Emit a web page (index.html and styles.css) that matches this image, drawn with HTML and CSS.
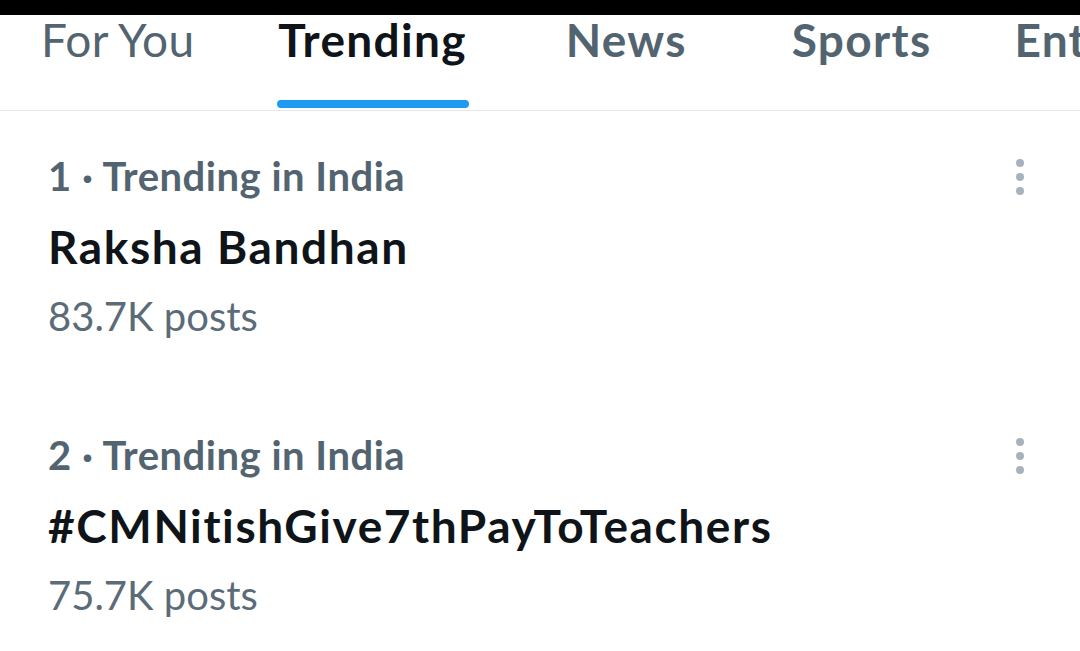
FILE: index.html
```html
<!DOCTYPE html>
<html lang="en">
<head>
<meta charset="utf-8">
<title>Trending</title>
<link rel="stylesheet" href="styles.css">
</head>
<body>
<div class="statusbar"></div>
<nav class="tabs">
  <div class="tab"><span class="tab-label">For You</span></div>
  <div class="tab active"><span class="tab-label">Trending</span><span class="indicator"></span></div>
  <div class="tab"><span class="tab-label">News</span></div>
  <div class="tab"><span class="tab-label">Sports</span></div>
  <div class="tab"><span class="tab-label">Entertainment</span></div>
</nav>
<main class="list">
  <section class="trend">
    <div class="trend-body">
      <div class="meta">1 · Trending in India</div>
      <div class="title">Raksha Bandhan</div>
      <div class="count">83.7K posts</div>
    </div>
    <div class="more" aria-label="More"><span></span><span></span><span></span></div>
  </section>
  <section class="trend">
    <div class="trend-body">
      <div class="meta">2 · Trending in India</div>
      <div class="title">#CMNitishGive7thPayToTeachers</div>
      <div class="count">75.7K posts</div>
    </div>
    <div class="more" aria-label="More"><span></span><span></span><span></span></div>
  </section>
</main>
</body>
</html>
```

FILE: styles.css
```css
* { box-sizing: border-box; }
html, body {
  margin: 0;
  padding: 0;
  background: #ffffff;
  width: 1080px;
  height: 651px;
  overflow: hidden;
  font-family: Lato, "Noto Sans", sans-serif;
}
.statusbar {
  height: 15px;
  background: #000000;
}
.tabs {
  display: flex;
  flex-wrap: nowrap;
  white-space: nowrap;
  border-bottom: 1px solid #e3e7ea;
  padding-top: 2px;
}
.tab {
  display: flex;
  flex-direction: column;
  align-items: stretch;
  padding: 0 53px 2px 52px;
  flex-shrink: 0;
}
.tab:first-child { padding-left: 41px; padding-right: 34px; }
.tab.active { padding-left: 50px; padding-right: 47px; }
.tab:last-child { padding-left: 30px; }
.tab-label {
  font-size: 46px;
  line-height: 46px;
  color: #536471;
  font-weight: 700;
  letter-spacing: 1.3px;
  height: 46px;
}
.tab:first-child .tab-label { font-weight: 400; letter-spacing: 0.3px; }
.tab.active .tab-label { color: #0f1419; }
.indicator {
  display: block;
  margin: 37px -2px 0 -1px;
  height: 8px;
  border-radius: 4px;
  background: #1d9bf0;
}
.tab:not(.active)::after {
  content: "";
  display: block;
  margin-top: 37px;
  height: 8px;
}
.list {
  display: flex;
  flex-direction: column;
}
.trend {
  display: flex;
  justify-content: space-between;
  padding: 41px 0 48px 48px;
}
.meta {
  font-size: 40px;
  line-height: 48px;
  font-weight: 700;
  letter-spacing: 0.5px;
  color: #536471;
}
.title {
  margin-top: 19px;
  font-size: 46px;
  line-height: 56px;
  font-weight: 700;
  letter-spacing: 1.6px;
  color: #0f1419;
}
.count {
  margin-top: 15px;
  font-size: 40px;
  line-height: 52px;
  font-weight: 400;
  color: #5b6b78;
}
.more {
  display: flex;
  flex-direction: column;
  align-items: center;
  gap: 6px;
  width: 20px;
  margin-right: 50px;
  padding-top: 7px;
}
.more span {
  width: 8px;
  height: 8px;
  border-radius: 50%;
  background: #a7b2bc;
}
```
